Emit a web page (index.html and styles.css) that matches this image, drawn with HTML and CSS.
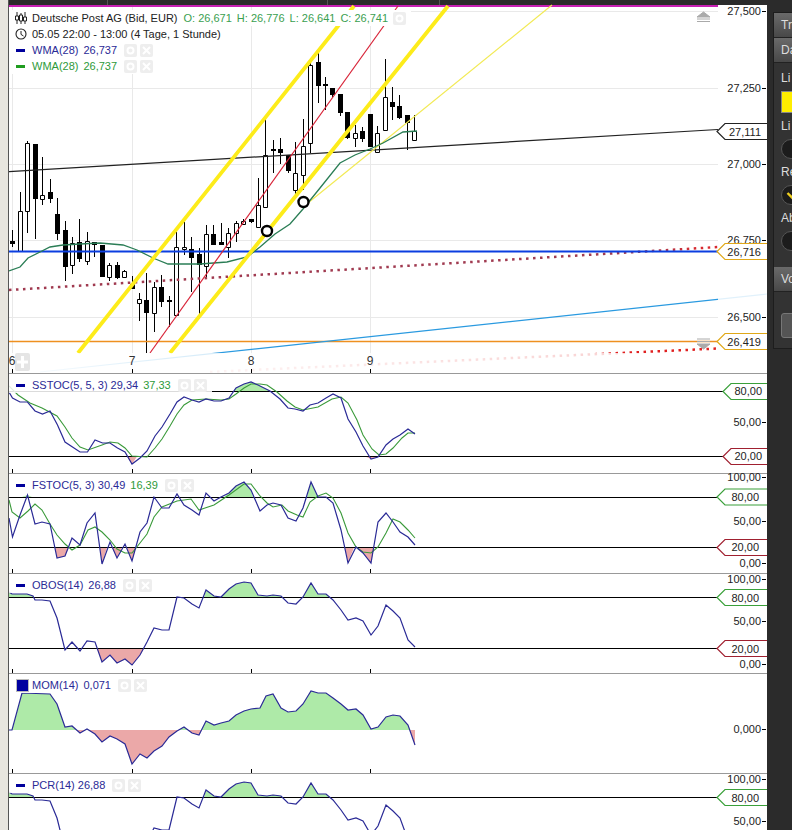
FILE: index.html
```html
<!DOCTYPE html>
<html lang="de">
<head>
<meta charset="utf-8">
<title>Deutsche Post AG</title>
<link rel="stylesheet" href="styles.css">
</head>
<body>
<svg class="sprite" width="0" height="0" aria-hidden="true">
  <symbol id="i-gear" viewBox="0 0 13 13"><circle cx="6.5" cy="6.5" r="3" fill="none" stroke="#fff" stroke-width="2"/></symbol>
  <symbol id="i-close" viewBox="0 0 13 13"><path d="M3 3L10 10M10 3L3 10" stroke="#fff" stroke-width="2"/></symbol>
</svg>
<div class="gutter"></div>
<main class="workspace">
  <div class="topbar">
    <div class="topline">
      <span class="seg seg-a"></span><span class="seg seg-b"></span><span class="seg seg-c"></span>
    </div>
  </div>

  <section class="pane pane-main">
    <svg class="plot" viewBox="9 7 758 366" width="758" height="366">
      <defs>
        <linearGradient id="fade" x1="0" y1="0" x2="0" y2="1"><stop offset="0" stop-color="#fff" stop-opacity=".8"/><stop offset="1" stop-color="#fff" stop-opacity=".96"/></linearGradient>
        <linearGradient id="dots" gradientUnits="userSpaceOnUse" x1="9" y1="0" x2="718" y2="0"><stop offset=".9" stop-color="#a03a50"/><stop offset=".97" stop-color="#d82a30"/></linearGradient>
      </defs>
      <path class="grid" d="M9 11.5H718M9 88.5H718M9 164.5H718M9 240.5H718M9 317.5H718M12.5 7V373M132.5 7V373M251.5 7V373M370.5 7V373"/>
      <path class="wick" d="M12.5 230V247M20.5 192V251M27.5 141V233M35.5 144V239M42.5 157V205M50.5 179V203M57.5 198V240M65.5 221V281M72.5 237V274M79.5 219V262M87.5 232V265M94.5 242V257M102.5 245V277M109.5 263V281M117.5 262V279M124.5 270V277M132.5 276V289M139.5 293V321M146.5 273V353M154.5 282V332M161.5 275V307M169.5 296V327M176.5 232V315M184.5 222V255M191.5 237V292M199.5 248V315M206.5 225V277M213.5 225V245M221.5 223V245M228.5 228V258M236.5 221V242M243.5 219V224M251.5 219V223M258.5 178V227M265.5 118V207M273.5 140V173M280.5 138V164M288.5 155V173M295.5 142V197M303.5 119V190M310.5 63V153M318.5 53V103M325.5 77V110M332.5 88V97M340.5 94V116M347.5 112V139M355.5 125V147M362.5 127V142M370.5 114V147M377.5 126V152M385.5 59V130M392.5 87V120M399.5 95V119M407.5 115V150M414.5 115V140"/>
      <path class="body-down" d="M10 241h5v3h-5zM33 144h5v55h-5zM48 192h5v7h-5zM55 214h5v20h-5zM63 230h5v37h-5zM77 242h5v17h-5zM92 242h5v3h-5zM100 245h5v32h-5zM115 265h5v13h-5zM130 284h5v5h-5zM144 300h5v13h-5zM159 287h5v15h-5zM167 300h5v2h-5zM189 249h5v9h-5zM197 254h5v11h-5zM211 234h5v11h-5zM219 242h5v3h-5zM249 219h5v3h-5zM271 149h5v2h-5zM278 149h5v4h-5zM286 155h5v16h-5zM316 62h5v24h-5zM323 84h5v2h-5zM330 88h5v7h-5zM338 94h5v19h-5zM345 112h5v26h-5zM360 131h5v8h-5zM368 114h5v33h-5zM390 102h5v5h-5zM397 106h5v12h-5zM405 115h5v8h-5z"/>
      <path class="body-up" d="M18.5 211.5h4v40h-4zM25.5 143.5h4v68h-4zM40.5 195.5h4v4h-4zM70.5 243.5h4v22h-4zM85.5 241.5h4v20h-4zM107.5 265.5h4v12h-4zM122.5 271.5h4v6h-4zM137.5 299.5h4v4h-4zM152.5 287.5h4v26h-4zM174.5 247.5h4v68h-4zM182.5 247.5h4v2h-4zM204.5 234.5h4v32h-4zM226.5 233.5h4v14h-4zM234.5 223.5h4v10h-4zM241.5 221.5h4v3h-4zM256.5 205.5h4v22h-4zM263.5 155.5h4v52h-4zM293.5 173.5h4v17h-4zM301.5 146.5h4v29h-4zM308.5 65.5h4v78h-4zM353.5 133.5h4v5h-4zM375.5 133.5h4v19h-4zM383.5 97.5h4v33h-4zM412.5 131.5h4v9h-4z"/>
      <path class="l-black" d="M9 171.6L718 129.5"/>
      <path class="l-orange" d="M9 341.5H718"/>
      <path class="l-sky" d="M40 372L767 294"/>
      <path class="l-dots" d="M9 290L718 247"/>
      <path class="l-dots2" d="M210 372L718 348.5"/>
      <path class="l-blue" d="M9 251.5H718"/>
      <path class="l-pale" d="M303 207L552 5"/>
      <polyline class="l-wma" points="9,271 20,267 28,258 38,253 50,247 63,245 80,244 100,243 123,245 137,250 153,258 168,264 200,264 227,262 247,257 260,247 275,234 290,224 303,209 320,188 340,163 355,155 370,149 383,143 403,132 417,131"/>
      <path class="l-yellow" d="M78 353L354 6M170 353L448 6"/>
      <path class="l-red" d="M150 353L398 6"/>
      <circle class="marker" cx="267" cy="231" r="5"/>
      <circle class="marker" cx="303.5" cy="202" r="5"/>
      <rect x="9" y="353" width="711" height="20" fill="url(#fade)"/>
      <rect class="axis-bg" x="718" y="7" width="49" height="366"/>
      <path class="arrow" d="M697 17L703.5 12L710 17ZM697 19H710M697 21.5H710"/>
      <path class="arrow" d="M697 339H710M697 341.5H710M697 344L710 344L703.5 349Z"/>
      <path class="wick" d="M12.5 369V373M132.5 369V373M251.5 369V373M370.5 369V373"/>
      <rect class="plus-box" x="15" y="353" width="15" height="18" rx="2"/>
      <path class="plus" d="M22.5 356V368M17 362H28"/>
      <g class="x-labels">
        <text x="12" y="365">6</text><text x="132" y="365">7</text><text x="251" y="365">8</text><text x="370" y="365">9</text>
      </g>
      <g class="y-labels">
        <text x="761" y="15">27,500</text><text x="761" y="92">27,250</text><text x="761" y="168">27,000</text><text x="761" y="244">26,750</text><text x="761" y="321">26,500</text>
      </g>
      <path class="wick" d="M762 11.5H766M762 88.5H766M762 164.5H766M762 240.5H766M762 317.5H766"/>
      <path class="tag tag-black" d="M767 123.5H725L717 131.5L725 139.5H767"/>
      <text class="tag-text" x="761" y="135.5">27,111</text>
      <path class="tag tag-gold" d="M767 243.5H725L717 251.5L725 259.5H767"/>
      <text class="tag-text" x="761" y="255.5">26,716</text>
      <path class="tag tag-gold" d="M767 333.5H725L717 341.5L725 349.5H767"/>
      <text class="tag-text" x="761" y="345.5">26,419</text>
    </svg>
    <div class="legend">
      <div class="row row-solid">
        <span class="key"><svg class="key-icon" viewBox="0 0 12 12"><path d="M2 0V12M6 1V12M10 0V12" stroke="#222" fill="none"/><path d="M0.5 4h3v4h-3zM4.5 3h3v6h-3zM8.5 5h3v4h-3z" fill="#fff" stroke="#222"/></svg></span>
        <span class="title">Deutsche Post AG (Bid, EUR)</span>
        <span class="ohlc ohlc-first">O: 26,671</span><span class="ohlc">H: 26,776</span><span class="ohlc">L: 26,641</span><span class="ohlc">C: 26,741</span>
        <span class="btn btn-near"><svg class="btn-icon"><use href="#i-gear"/></svg></span>
      </div>
      <div class="row row-solid">
        <span class="key"><svg class="key-icon" viewBox="0 0 12 12"><circle cx="6" cy="6" r="5" fill="none" stroke="#222" stroke-width="1.1"/><path d="M6 3V6.4L8.5 8" fill="none" stroke="#222"/></svg></span>
        <span class="title">05.05 22:00 - 13:00 (4 Tage, 1 Stunde)</span>
      </div>
      <div class="row row-solid">
        <span class="key"><span class="dash"></span></span>
        <span class="name">WMA(28)</span><span class="val">26,737</span>
        <span class="btn btn-first"><svg class="btn-icon"><use href="#i-gear"/></svg></span><span class="btn"><svg class="btn-icon"><use href="#i-close"/></svg></span>
      </div>
      <div class="row row-solid">
        <span class="key"><span class="dash dash-green"></span></span>
        <span class="name name-green">WMA(28)</span><span class="val val-green">26,737</span>
        <span class="btn btn-first"><svg class="btn-icon"><use href="#i-gear"/></svg></span><span class="btn"><svg class="btn-icon"><use href="#i-close"/></svg></span>
      </div>
    </div>
  </section>

  <section class="pane">
    <svg class="plot" viewBox="9 374 758 99" width="758" height="99">
      <path class="fill-up" d="M233.5 391.5L236 388L244 384L251 382L258 385L260 386L270 391.5Z"/>
      <path class="fill-down" d="M127 456.5L132 464L137 456.5ZM365 456.5L371 459L378 457L379 456.5Z"/>
      <path class="level" d="M9 391.5H723M9 456.5H723"/>
      <polyline class="l-signal" points="9,386 18,395 30,403 42,408 57,416 65,427 72,438 80,447 88,450 102,445 110,442 118,443 125,448 132,456 147,457 155,448 162,439 170,426 177,414 184,405 192,400 206,399 221,400 229,399 236,394 244,388 251,384 260,384 267,385 277,392 287,401 295,407 303,410 318,407 332,399 341,397 348,403 357,420 363,435 372,449 379,455 386,454 393,448 402,438 408,433 415,433"/>
      <polyline class="l-main" points="9,392 12.5,398 20,402 27.5,402 35,411 42.5,414 50,411 57.5,425 65,442 72.5,447 80,452 87.5,452 95,440 102.5,443 110,443 117.5,448 125,452 132,464 140,458 147,451 155,436 162,427 170,414 177,402 184,397 192,400 199,402 206,399 214,401 221,401 229,398 236,388 244,384 251,382 258,385 260,386 270,391 280,399 288,408 295,409 303,411 310,405 318,403 326,398 333,394 341,398 348,419 356,432 363,446 371,459 378,457 386,445 393,439 400,435 408,429 415,434"/>
      <path class="wick" d="M12.5 469V473M132.5 469V473M251.5 469V473M370.5 469V473"/>
      <g class="y-labels"><text x="761" y="426">50,00</text></g>
      <path class="wick" d="M762 422.5H766"/>
      <path class="tag tag-green" d="M767 383.5H731L723 391.5L731 399.5H767"/>
      <text class="tag-text" x="762" y="395">80,00</text>
      <path class="tag tag-red" d="M767 448.5H731L723 456.5L731 464.5H767"/>
      <text class="tag-text" x="762" y="460">20,00</text>
    </svg>
    <div class="legend">
      <div class="row row-soft">
        <span class="key"><span class="dash"></span></span>
        <span class="name">SSTOC(5, 5, 3)</span><span class="val val-tight">29,34</span><span class="val val-green">37,33</span>
        <span class="btn btn-first"><svg class="btn-icon"><use href="#i-gear"/></svg></span><span class="btn"><svg class="btn-icon"><use href="#i-close"/></svg></span>
      </div>
    </div>
  </section>

  <section class="pane">
    <svg class="plot" viewBox="9 474 758 99" width="758" height="99">
      <path class="fill-up" d="M22 497L27.5 495L32 497ZM224 497L229 493L236 486L244 482L251 490L253 497ZM307 497L311 482L318 497Z"/>
      <path class="fill-down" d="M55 547.5L57 558L65 556L69 547.5ZM100 547.5L102 564L107 547.5ZM112 547.5L117 558L122 547.5ZM127 547.5L132 561L136 547.5ZM345 547.5L348 563L354 547.5ZM356 547.5L363 553L371 563L374 547.5Z"/>
      <path class="level" d="M9 497.5H717M9 547.5H717"/>
      <polyline class="l-signal" points="9,500 12,512 20,518 28,511 35,504 42,510 50,524 57,535 65,544 72,550 80,545 88,530 95,527 102,532 110,540 117,549 125,553 132,553 140,543 147,534 154,517 162,507 177,501 191,499 199,510 214,505 229,495 244,484 251,484 260,496 267,503 273,507 282,505 288,511 297,515 303,517 310,502 318,496 326,493 333,498 341,513 348,533 356,547 363,552 371,553 378,547 386,533 393,519 400,522 408,530 415,538"/>
      <polyline class="l-main" points="9,518 12.5,537 20,515 27.5,495 35,524 42,522 50,524 57,558 65,556 72,538 80,545 87,523 95,513 102,564 110,542 117,558 125,544 132,561 140,532 147,523 154,497 162,508 169,508 177,494 184,505 192,510 199,515 206,493 214,501 221,497 229,493 236,486 244,482 251,490 260,511 267,505 273,503 281,505 288,518 296,521 303,508 311,482 318,497 326,497 333,503 341,530 348,563 356,547 363,553 371,563 378,522 386,513 393,522 400,532 408,537 415,545"/>
      <path class="wick" d="M12.5 569V573M132.5 569V573M251.5 569V573M370.5 569V573"/>
      <g class="y-labels"><text x="761" y="481">100,00</text><text x="761" y="525">50,00</text><text x="761" y="567">0,00</text></g>
      <path class="wick" d="M762 477.5H766M762 521.5H766M762 563.5H766"/>
      <path class="tag tag-green" d="M767 489H725L717 497L725 505H767"/>
      <text class="tag-text" x="759" y="501">80,00</text>
      <path class="tag tag-red" d="M767 539.5H725L717 547.5L725 555.5H767"/>
      <text class="tag-text" x="759" y="551">20,00</text>
    </svg>
    <div class="legend">
      <div class="row row-soft">
        <span class="key"><span class="dash"></span></span>
        <span class="name">FSTOC(5, 3)</span><span class="val val-tight">30,49</span><span class="val val-green">16,39</span>
        <span class="btn btn-first"><svg class="btn-icon"><use href="#i-gear"/></svg></span><span class="btn"><svg class="btn-icon"><use href="#i-close"/></svg></span>
      </div>
    </div>
  </section>

  <section class="pane">
    <svg class="plot" viewBox="9 574 758 99" width="758" height="99">
      <path class="fill-up" d="M9 597.5V592L12 594L27 594L33 596L34 597.5ZM204 597.5L206 590L214 596L221 597L229 589L236 584L244 582L251 583L258 595L260 596L267 596L273 595L281 596L283 597.5ZM302 597.5L303 597L311 583L318 594L326 594L330 597.5Z"/>
      <path class="fill-down" d="M97 648.5L102 662L110 655L117 663L125 659L132 665L140 655L144 648.5Z"/>
      <path class="level" d="M9 597.5H717M9 648.5H717"/>
      <polyline class="l-main" points="9,592 12,594 27,594 33,596 35,600 42,600 50,601 57,618 65,650 72,642 80,651 87,641 95,642 102,662 110,655 117,663 125,659 132,665 140,655 147,642 154,628 162,630 169,630 177,597 184,598 192,604 199,608 206,590 214,596 221,597 229,589 236,584 244,582 251,583 258,595 267,596 273,595 281,596 288,603 296,604 303,597 311,583 318,594 326,594 333,600 341,610 348,620 356,618 363,621 371,635 378,626 386,605 393,611 400,618 408,640 415,647"/>
      <path class="wick" d="M12.5 669V673M132.5 669V673M251.5 669V673M370.5 669V673"/>
      <g class="y-labels"><text x="761" y="583">100,00</text><text x="761" y="625">50,00</text><text x="761" y="668">0,00</text></g>
      <path class="wick" d="M762 579.5H766M762 621.5H766M762 664.5H766"/>
      <path class="tag tag-green" d="M767 589.5H725L717 597.5L725 605.5H767"/>
      <text class="tag-text" x="759" y="601.5">80,00</text>
      <path class="tag tag-red" d="M767 640.5H725L717 648.5L725 656.5H767"/>
      <text class="tag-text" x="759" y="652.5">20,00</text>
    </svg>
    <div class="legend">
      <div class="row row-soft">
        <span class="key"><span class="dash"></span></span>
        <span class="name">OBOS(14)</span><span class="val">26,88</span>
        <span class="btn btn-first"><svg class="btn-icon"><use href="#i-gear"/></svg></span><span class="btn"><svg class="btn-icon"><use href="#i-close"/></svg></span>
      </div>
    </div>
  </section>

  <section class="pane">
    <svg class="plot" viewBox="9 674 758 99" width="758" height="99">
      <defs>
        <clipPath id="above"><rect x="9" y="674" width="500" height="56"/></clipPath>
        <clipPath id="below"><rect x="9" y="730" width="500" height="43"/></clipPath>
        <polygon id="mom-area" points="9,730 12,730 22,693 50,694 57,704 65,727 72,726 80,733 87,729 95,734 102,742 110,736 117,739 125,744 132,764 140,754 147,758 154,751 162,746 169,737 177,731 184,727 192,733 199,735 206,721 214,725 221,723 229,721 236,715 244,711 251,709 260,708 266,696 273,694 281,708 288,712 296,711 303,704 311,691 318,693 326,693 333,698 341,704 348,710 356,709 363,715 371,729 378,727 386,717 393,715 400,716 408,725 415,745 415,730"/>
      </defs>
      <use class="fill-up" href="#mom-area" clip-path="url(#above)"/>
      <use class="fill-down" href="#mom-area" clip-path="url(#below)"/>
      <polyline class="l-main" points="9,730 12,730 22,693 50,694 57,704 65,727 72,726 80,733 87,729 95,734 102,742 110,736 117,739 125,744 132,764 140,754 147,758 154,751 162,746 169,737 177,731 184,727 192,733 199,735 206,721 214,725 221,723 229,721 236,715 244,711 251,709 260,708 266,696 273,694 281,708 288,712 296,711 303,704 311,691 318,693 326,693 333,698 341,704 348,710 356,709 363,715 371,729 378,727 386,717 393,715 400,716 408,725 415,745"/>
      <path class="wick" d="M12.5 769V773M132.5 769V773M251.5 769V773M370.5 769V773"/>
      <g class="y-labels"><text x="761" y="733">0,000</text></g>
      <path class="wick" d="M762 729.5H766"/>
    </svg>
    <div class="legend">
      <div class="row row-soft">
        <span class="key"><span class="swatch"></span></span>
        <span class="name">MOM(14)</span><span class="val">0,071</span>
        <span class="btn btn-first"><svg class="btn-icon"><use href="#i-gear"/></svg></span><span class="btn"><svg class="btn-icon"><use href="#i-close"/></svg></span>
      </div>
    </div>
  </section>

  <section class="pane pane-last">
    <svg class="plot" viewBox="9 574 758 56" width="758" height="56">
      <path class="fill-up" d="M9 597.5V592L12 594L27 594L33 596L34 597.5ZM204 597.5L206 590L214 596L221 597L229 589L236 584L244 582L251 583L258 595L260 596L267 596L273 595L281 596L283 597.5ZM302 597.5L303 597L311 583L318 594L326 594L330 597.5Z"/>
      <path class="level" d="M9 597.5H717"/>
      <polyline class="l-main" points="9,592 12,594 27,594 33,596 35,600 42,600 50,601 57,618 65,650 72,642 80,651 87,641 95,642 102,662 110,655 117,663 125,659 132,665 140,655 147,642 154,628 162,630 169,630 177,597 184,598 192,604 199,608 206,590 214,596 221,597 229,589 236,584 244,582 251,583 258,595 267,596 273,595 281,596 288,603 296,604 303,597 311,583 318,594 326,594 333,600 341,610 348,620 356,618 363,621 371,635 378,626 386,605 393,611 400,618 408,640 415,647"/>
      <g class="y-labels"><text x="761" y="583">100,00</text><text x="761" y="625">50,00</text></g>
      <path class="wick" d="M762 579.5H766M762 621.5H766"/>
      <path class="tag tag-green" d="M767 589.5H725L717 597.5L725 605.5H767"/>
      <text class="tag-text" x="759" y="601.5">80,00</text>
    </svg>
    <div class="legend">
      <div class="row row-soft">
        <span class="key"><span class="dash"></span></span>
        <span class="name">PCR(14)</span><span class="val val-tight">26,88</span>
        <span class="btn btn-first"><svg class="btn-icon"><use href="#i-gear"/></svg></span><span class="btn"><svg class="btn-icon"><use href="#i-close"/></svg></span>
      </div>
    </div>
  </section>
</main>

<aside class="sidebar">
  <div class="panel">
    <div class="tab">Tr</div>
    <div class="tab">Da</div>
    <div class="fields">
      <div class="label">Li</div>
      <div class="color-well"></div>
      <div class="label">Li</div>
      <div class="toggle"></div>
      <div class="label">Re</div>
      <div class="toggle toggle-on"><svg class="check" viewBox="0 0 12 10"><path d="M1.5 3L6 7.5L10.5 3" fill="none" stroke="#f0d020" stroke-width="2.4"/></svg></div>
      <div class="label">Ab</div>
      <div class="toggle"></div>
    </div>
    <div class="tab">Vo</div>
    <div class="tail"><div class="action"></div></div>
  </div>
</aside>
</body>
</html>
```
FILE: styles.css
```css
* { box-sizing: border-box; }

html, body {
  margin: 0;
  height: 830px;
  overflow: hidden;
}

body {
  display: flex;
  width: 792px;
  background: #fff;
  font-family: "Liberation Sans", Arial, sans-serif;
  font-size: 11px;
  color: #222;
}

.sprite { position: absolute; }

.gutter {
  flex: 0 0 9px;
  background: #e8e6df;
  border-right: 1px solid #555;
}

.workspace {
  flex: 0 0 758px;
  display: flex;
  flex-direction: column;
  height: 830px;
  overflow: hidden;
}

.topbar {
  flex: 0 0 7px;
  background: linear-gradient(#2b2b2b 5px, #fff 5px);
}

.topline {
  display: flex;
  width: 709px;
  height: 7px;
  border-bottom: 2px solid #c81fb4;
  background: #2b2b2b;
}

.seg { border-right: 1px solid #555; }
.seg-a { width: 99px; }
.seg-b { width: 220px; }
.seg-c { width: 112px; }

.pane {
  position: relative;
  flex: 0 0 100px;
  border-top: 1px solid #999;
}

.pane-main { flex: 0 0 366px; border-top: 0; }
.pane-last { flex: 0 0 57px; }

.plot {
  position: absolute;
  top: 0;
  left: 0;
  display: block;
  overflow: visible;
}

/* chart strokes */
.grid { stroke: #e9e9e9; fill: none; }
.wick { stroke: #000; fill: none; }
.body-down { fill: #000; }
.body-up { fill: #fff; stroke: #000; }
.l-black { stroke: #222; stroke-width: 1.2; fill: none; }
.l-orange { stroke: #ee9020; stroke-width: 1.6; fill: none; }
.l-sky { stroke: #2a9ae0; stroke-width: 1.2; fill: none; }
.l-dots { stroke: url(#dots); stroke-width: 2.5; stroke-dasharray: 2.5 4.5; fill: none; }
.l-dots2 { stroke: #e02020; stroke-width: 2.5; stroke-dasharray: 2.5 4.5; fill: none; }
.l-blue { stroke: #0b3ee0; stroke-width: 2.2; fill: none; }
.l-pale { stroke: #f2ea55; stroke-width: 1.2; fill: none; }
.l-wma { stroke: #2a7d55; stroke-width: 1.3; fill: none; }
.l-yellow { stroke: #fdec1a; stroke-width: 3.8; fill: none; }
.l-red { stroke: #d82438; stroke-width: 1.2; fill: none; }
.marker { fill: #fff; stroke: #000; stroke-width: 2.4; }
.axis-bg { fill: #fff; fill-opacity: .86; }
.arrow { fill: #aaa; stroke: #aaa; }
.plus-box { fill: #dcdcdc; fill-opacity: .75; }
.plus { stroke: #fff; stroke-width: 3; fill: none; }

.level { stroke: #000; stroke-width: 1.2; fill: none; }
.l-main { stroke: #2a2a96; stroke-width: 1.2; fill: none; }
.l-signal { stroke: #3a9a3a; stroke-width: 1.1; fill: none; }
.fill-up { fill: #aeeaa8; }
.fill-down { fill: #eba8a8; }

.x-labels text { font-size: 12px; fill: #333; text-anchor: middle; }
.y-labels text { font-size: 11px; fill: #222; text-anchor: end; }
.tag { fill: #fff; stroke-width: 1.2; }
.tag-black { stroke: #222; }
.tag-gold { stroke: #e0a818; }
.tag-green { stroke: #3aa03a; }
.tag-red { stroke: #a02030; }
.tag-text { font-size: 11px; fill: #222; text-anchor: end; }

/* legends */
.legend {
  position: absolute;
  top: 3px;
  left: 0;
  display: flex;
  flex-direction: column;
  align-items: flex-start;
}

.row {
  display: flex;
  align-items: center;
  height: 16px;
  white-space: nowrap;
  padding-right: 5px;
}

.row-solid { background: #fff; }
.row-soft { background: rgba(255, 255, 255, .86); }

.key {
  flex: 0 0 23px;
  display: flex;
  align-items: center;
  padding-left: 6px;
}

.key-icon { width: 12px; height: 12px; display: block; }

.dash {
  width: 9px;
  height: 3px;
  margin-left: 1px;
  background: #00009c;
}

.dash-green { background: #1f9c1f; }

.swatch {
  width: 13px;
  height: 13px;
  margin-left: 1px;
  background: #0000a0;
  border: 1px solid #bbb;
}

.title { color: #222; }
.ohlc { color: #3aa050; margin-left: 5px; }
.ohlc-first { margin-left: 6px; }
.name { color: #2a2a96; }
.name-green { color: #2e9a3a; }
.val { color: #2a2a96; margin-left: 5px; }
.val-tight { margin-left: 3px; }
.val-green { color: #2e9a3a; }

.btn {
  width: 13px;
  height: 13px;
  margin-left: 3px;
  background: #eee;
  border-radius: 2px;
}

.btn-first { margin-left: 7px; }
.btn-near { margin-left: 5px; }
.btn-icon { width: 13px; height: 13px; display: block; }

/* side panel */
.sidebar {
  flex: 0 0 25px;
  height: 830px;
  padding: 12px 0 0 6px;
  background: #2b2b2b;
  overflow: hidden;
}

.panel {
  width: 70px;
  height: 337px;
  background: #333;
  border: 1px solid #1d1d1d;
  border-right: 0;
  color: #ddd;
  font-size: 12px;
  white-space: nowrap;
}

.tab {
  height: 25px;
  line-height: 24px;
  padding-left: 7px;
  background: linear-gradient(#6a6a6a, #484848);
  border-bottom: 1px solid #222;
}

.fields {
  display: flex;
  flex-direction: column;
  gap: 7px;
  padding: 9px 0 16px 7px;
}

.label { height: 12px; line-height: 12px; }

.color-well {
  width: 40px;
  height: 22px;
  background: #ffee00;
  border: 1px solid #888;
}

.toggle {
  display: flex;
  align-items: center;
  width: 40px;
  height: 20px;
  padding-left: 4px;
  background: #1c1c1c;
  border: 1px solid #555;
  border-radius: 10px;
}

.check { width: 12px; height: 10px; display: block; }

.tail { padding: 21px 0 0 7px; }

.action {
  width: 60px;
  height: 25px;
  background: #555;
  border: 1px solid #777;
  border-radius: 3px;
}
```
